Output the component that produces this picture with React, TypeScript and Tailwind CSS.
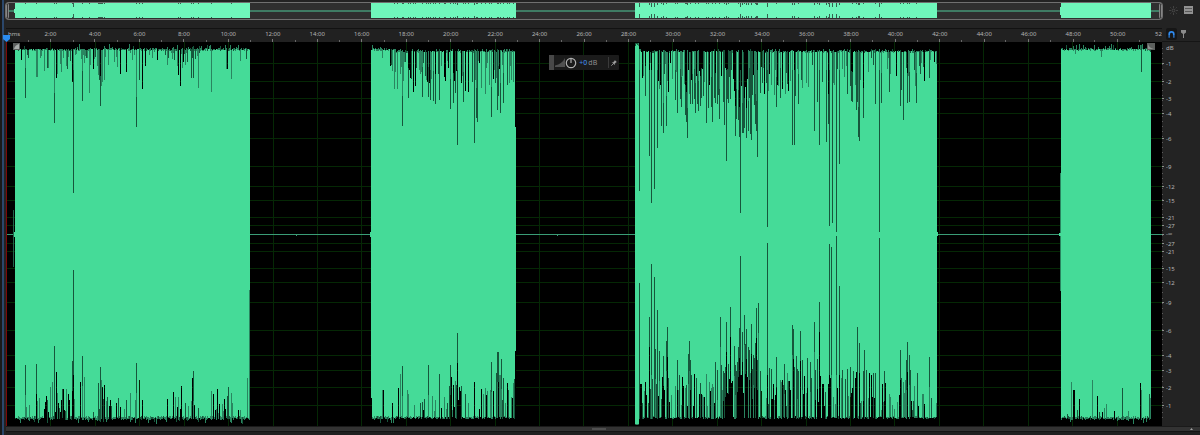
import type { ReactNode } from 'react';

type Dip = [x: number, y: number, w?: number];
type Zone = [from: number, to: number, chance: number, depth: number];

const LEFT = 6;
const TOP = 42;
const WIDTH = 1156;
const HEIGHT = 384;
const CENTER = 234;
const AMP = 192;

const MINUTES = Array.from({ length: 25 }, (_, i) => (i + 1) * 2);
const TICK = 44.42;
const DB = [1, 2, 3, 4, 6, 9, 12, 15, 21, 27];

// loud passages: start, end
const CLIPS = [
  [15, 250],
  [371, 516],
  [635, 937],
  [1061, 1151],
];

const TOP_DIPS: Dip[] = [
  [25, 98], [36, 77, 2], [40, 58], [44, 71], [47, 68, 2], [54, 123], [56, 78], [57, 74], [61, 72], [63, 58], [67, 69], [72, 82],
  [73, 193], [82, 101], [84, 63], [89, 93], [93, 69], [98, 75], [99, 80], [100, 106], [101, 86], [102, 82], [104, 80],
  [114, 62], [117, 67], [120, 74], [126, 72], [136, 127], [139, 80], [142, 89], [145, 66], [152, 58], [167, 65],
  [174, 60], [177, 66], [178, 75], [180, 86], [182, 68], [183, 62], [185, 65], [191, 78], [193, 78], [198, 88], [211, 92],
  [226, 69, 2], [231, 79], [240, 61], [246, 59],
  [382, 58], [392, 71], [394, 89], [397, 89], [400, 74], [402, 126], [403, 81], [408, 98], [410, 78], [413, 92], [415, 86],
  [420, 74], [422, 97], [426, 80], [428, 97], [430, 100], [433, 101], [435, 104], [439, 100], [444, 77], [445, 81],
  [450, 109], [453, 103], [455, 93], [457, 145], [463, 102], [465, 91], [468, 92], [474, 143], [476, 118], [477, 122],
  [481, 88], [485, 94], [489, 85], [491, 117], [497, 110], [498, 96], [500, 113], [503, 103], [507, 85], [509, 83], [513, 82],
  [639, 191], [642, 78], [645, 96], [649, 156], [651, 203], [654, 189], [657, 148], [661, 126], [663, 133], [666, 126],
  [668, 92], [675, 100], [677, 113], [685, 115], [686, 122], [687, 138], [690, 104], [695, 113], [698, 111], [701, 98],
  [703, 96], [706, 123], [708, 108], [712, 122], [715, 103], [719, 119], [724, 125], [726, 161], [728, 103], [734, 91],
  [738, 120], [740, 213], [742, 133], [744, 128], [746, 138], [748, 131], [751, 140], [755, 124], [756, 131], [757, 157],
  [760, 93], [764, 94], [767, 227], [774, 95], [776, 107], [780, 98], [782, 89], [792, 145], [794, 145], [795, 96],
  [798, 104], [802, 88], [808, 87], [814, 131], [817, 102], [819, 145], [826, 142], [828, 124], [829, 226], [832, 223],
  [834, 85], [836, 232], [839, 164], [847, 94], [852, 102], [856, 110], [858, 137], [859, 141], [863, 118], [868, 72],
  [875, 104], [879, 232], [881, 103], [889, 92], [900, 106], [901, 90], [903, 120], [907, 103], [909, 102], [916, 103],
  [920, 74], [924, 81], [929, 78], [936, 64],
  [1075, 54], [1101, 57], [1141, 72], [1150, 52],
];

const BOTTOM_DIPS: Dip[] = [
  [25, 365], [26, 407], [29, 405], [36, 364], [37, 401], [39, 398], [44, 409], [46, 396], [47, 400], [50, 387], [52, 382],
  [54, 346], [56, 372], [57, 393], [59, 408], [61, 400], [62, 389, 2], [66, 389], [68, 394], [69, 400], [72, 361], [73, 270],
  [74, 399], [80, 382], [82, 356], [84, 377], [93, 412], [98, 383], [100, 367], [101, 380], [102, 387], [104, 385], [106, 401],
  [107, 397], [110, 400], [116, 403], [118, 398], [120, 407], [124, 409], [126, 400], [130, 393], [135, 400], [136, 363],
  [139, 380], [142, 400], [167, 399], [173, 392], [175, 397], [178, 397], [181, 386], [185, 403], [191, 401], [192, 378],
  [193, 371], [198, 408], [211, 391], [213, 394], [217, 389], [219, 404], [224, 399], [227, 396], [228, 387], [231, 393],
  [232, 403], [238, 410], [240, 410], [247, 378], [249, 400],
  [371, 398], [382, 390, 2], [392, 403], [398, 388], [400, 374], [402, 366], [407, 390], [408, 394], [414, 405], [420, 403],
  [422, 402], [424, 399], [428, 365], [432, 396], [435, 400], [439, 374], [444, 397], [449, 386], [450, 365], [451, 377],
  [453, 385], [455, 381], [456, 385], [457, 333], [459, 387], [461, 386], [465, 394], [468, 403], [474, 382], [481, 389],
  [485, 388], [491, 362], [493, 391], [496, 373], [497, 352, 2], [499, 375, 2], [501, 359], [503, 378], [507, 383], [508, 390],
  [513, 383], [514, 379],
  [639, 283], [645, 382], [649, 317], [651, 264], [654, 277], [655, 349], [657, 310], [659, 351], [662, 377], [663, 356],
  [666, 341], [667, 327], [668, 378], [675, 386], [677, 360], [679, 375], [682, 377], [685, 388], [688, 354], [689, 341],
  [690, 360], [691, 375], [694, 374], [696, 378], [699, 394], [703, 397], [706, 374], [709, 382], [712, 384], [715, 362],
  [717, 370], [720, 317], [724, 373], [726, 322], [728, 364], [730, 307], [734, 346], [737, 362], [738, 347], [739, 328],
  [740, 256], [742, 332], [744, 315], [745, 344], [746, 329], [748, 347], [749, 350], [751, 324], [753, 355], [755, 343], [756, 308],
  [758, 303], [760, 371], [767, 243], [769, 368], [771, 369], [776, 357], [780, 380], [784, 364], [787, 373], [792, 325],
  [793, 329], [796, 356], [798, 371], [800, 331], [802, 360], [804, 376], [807, 358], [810, 362], [814, 322], [815, 370],
  [817, 359], [819, 302], [825, 392], [828, 384], [829, 244], [831, 247], [836, 236], [839, 286], [841, 378], [842, 370],
  [845, 379], [847, 369], [850, 367], [853, 371], [857, 327], [859, 343], [864, 350], [866, 370], [869, 373], [871, 375],
  [875, 373], [879, 238], [882, 384], [884, 371], [885, 383], [889, 394], [892, 405], [900, 350], [901, 378], [903, 382],
  [906, 360], [907, 342], [909, 355], [910, 370], [914, 386], [917, 373], [922, 394], [923, 394], [929, 357], [936, 403],
  [1067, 414], [1071, 382], [1073, 390, 2], [1077, 410], [1079, 399], [1092, 380], [1097, 396], [1099, 412], [1102, 412],
  [1104, 408], [1106, 404], [1114, 411], [1122, 388], [1128, 411], [1140, 383], [1141, 390], [1149, 394], [1150, 398],
];

// how densely the space between the named dips is filled
const TOP_ZONES: Zone[] = [
  [15, 60, 0.1, 12], [60, 110, 0.35, 16], [110, 170, 0.15, 10], [170, 200, 0.5, 12],
  [390, 516, 0.5, 32], [638, 680, 0.55, 42], [680, 720, 0.7, 55], [720, 735, 0.6, 50], [735, 758, 0.9, 85],
  [758, 800, 0.45, 42], [800, 850, 0.4, 34], [850, 862, 0.7, 55], [862, 896, 0.35, 22], [896, 937, 0.45, 34],
];
const BOTTOM_ZONES: Zone[] = [
  [45, 75, 0.4, 18], [98, 112, 0.5, 20], [170, 195, 0.3, 14], [210, 235, 0.3, 14],
  [400, 450, 0.2, 14], [450, 462, 0.8, 32], [475, 516, 0.4, 28], [638, 680, 0.6, 40], [680, 720, 0.5, 36],
  [720, 735, 0.8, 55], [735, 758, 1, 75], [758, 790, 0.6, 40], [790, 803, 0.8, 58], [803, 850, 0.6, 42],
  [850, 876, 0.8, 48], [876, 898, 0.3, 20], [898, 912, 0.8, 45], [912, 937, 0.3, 20],
];

function noise(n: number) {
  const v = Math.sin(n * 127.1 + 11.7) * 43758.5453;
  return v - Math.floor(v);
}

function depthAt(x: number, zones: Zone[], seed: number) {
  const zone = zones.find(([from, to]) => x >= from && x < to);
  if (!zone || noise(x + seed) > zone[2]) return 0;
  return Math.round((0.25 + noise(x * 3 + seed) * 0.75) * zone[3]);
}

function expand(dips: Dip[]) {
  const map = new Map<number, number>();
  dips.forEach(([x, y, w = 1]) => {
    for (let i = 0; i < w; i++) map.set(x + i, y);
  });
  return map;
}

function buildWave() {
  const top = expand(TOP_DIPS);
  const bottom = expand(BOTTOM_DIPS);
  const out = { body: '', mid: '', dark: '' };

  const shade = (x: number, from: number, to: number, seed: number, midShare: number) => {
    if (to <= from) return;
    const r = noise(x * 7 + seed);
    const rect = `M${x} ${from}h1V${to}h-1z`;
    if (r < midShare) out.mid += rect;
    else if (r < midShare + 0.25) out.dark += rect;
  };

  CLIPS.forEach(([start, end], clip) => {
    for (let x = start; x < end; x++) {
      const calm = clip === 1 ? x > 393 : clip === 2;
      const attack = x > 634 && x < 639;
      const base = calm ? 52 : 50;
      const jump = noise(x) > 0.82 ? Math.round(noise(x * 5) * 6) : Math.round(noise(x * 2) * 2);
      const low = noise(x + 900) > 0.82 ? Math.round(noise(x * 11) * 6) : Math.round(noise(x * 13) * 2);
      const outerTop = attack ? 43 : base - (calm ? Math.min(jump, 3) : jump);
      const outerBottom = attack ? 425 : (calm ? 417 : 418) + (calm ? Math.min(low, 2) : low);
      const ripple = Math.round(noise(x * 17) * 2) - 1;

      const innerTop = attack ? 44 + (x % 3) : (top.get(x) ?? base + ripple + depthAt(x, TOP_ZONES, 40));
      const innerBottom = attack ? 424 : (bottom.get(x) ?? 417 - ripple - depthAt(x, BOTTOM_ZONES, 80));
      out.body += `M${x} ${innerTop}h1V${innerBottom}h-1z`;

      const busyTop = x > 695 && x < 760;
      const busyBottom = (x > 722 && x < 762) || (x > 850 && x < 876) || (x > 788 && x < 800) || (x > 447 && x < 460);
      shade(x, outerTop, innerTop, 3, busyTop ? 0.2 : innerTop < 60 ? 0.8 : 0.5);
      shade(x, innerBottom, outerBottom, 9, busyBottom ? 0.12 : innerBottom > 412 ? 0.75 : 0.4);
      // long gaps stay readable as a thin dark stripe
      if (innerTop > 95) out.dark += `M${x} ${innerTop - 30}h1V${innerTop}h-1z`;
      if (innerBottom < 372) out.dark += `M${x} ${innerBottom}h1v30h-1z`;
      if (innerTop > 140) out.dark += `M${x} 70h1V${innerTop}h-1z`;
      if (innerBottom < 300) out.dark += `M${x} ${innerBottom}h1V375h-1z`;
    }
  });
  return out;
}

const WAVE = buildWave();

const LEVELS = DB.flatMap((db) => {
  const d = AMP * Math.pow(10, -db / 20);
  return [
    { label: `-${db}`, y: Math.round(CENTER - d) },
    { label: `-${db}`, y: Math.round(CENTER + d) },
  ];
});

const MINOR = Array.from({ length: 72 }, (_, i) => 48 + Math.round(i * 5.2));

function Waveform() {
  return (
    <svg
      className="block h-[384px] w-full"
      viewBox={`${LEFT} ${TOP} ${WIDTH} ${HEIGHT}`}
      preserveAspectRatio="none"
      shapeRendering="crispEdges"
      role="img"
      aria-label="Waveform"
    >
      <rect x={LEFT} y={TOP} width={WIDTH} height={HEIGHT} fill="#000" />
      {MINUTES.map((m) => (
        <rect key={m} x={Math.round(LEFT + (m / 2) * TICK)} y={TOP} width="1" height={HEIGHT} fill="#052805" />
      ))}
      {LEVELS.map(({ y }) => (
        <rect key={y} x={LEFT} y={y} width={WIDTH} height="1" fill="#052805" />
      ))}
      <rect x={LEFT} y={CENTER} width={WIDTH} height="1" fill="#3a9c76" />
      <path d={WAVE.mid} fill="#2a8560" />
      <path d={WAVE.dark} fill="#17563c" />
      <path d={WAVE.body} fill="#45db98" />
      <rect x="13" y="210" width="1" height="57" fill="#22634a" />
      <rect x="14" y="232" width="1" height="5" fill="#45db98" />
      <rect x="249" y="290" width="1" height="130" fill="#2a8560" />
      <rect x="370" y="232" width="1" height="5" fill="#45db98" />
      <rect x="515" y="44" width="1" height="83" fill="#000" />
      <rect x="515" y="351" width="1" height="74" fill="#000" />
      <rect x="937" y="232" width="1" height="4" fill="#45db98" />
      <rect x="1060" y="173" width="1" height="118" fill="#2a8560" />
      <rect x="1059" y="233" width="2" height="3" fill="#45db98" />
      <rect x="296" y="234" width="1" height="2" fill="#3a9c76" />
      <rect x="557" y="234" width="1" height="2" fill="#3a9c76" />
      <rect x={LEFT} y={TOP} width="1" height={HEIGHT} fill="#7d0808" />
      {/* fade handles */}
      <g shapeRendering="auto">
        <rect x="13" y="43" width="7" height="7" fill="#5c5f5d" />
        <path d="M14 49q1-4 5-5v5z" fill="#a9adab" />
        <rect x="1147" y="43" width="8" height="7" fill="#5c5f5d" />
        <path d="M1148 44q1 4 6 5h-6z" fill="#8f9391" />
      </g>
    </svg>
  );
}

function Overview() {
  const marks = TOP_DIPS.filter(([x, y]) => y > (x > 635 ? 98 : 74));
  return (
    <div className="relative h-4 overflow-hidden rounded-[3px] bg-[#2f2f2f] ring-1 ring-[#707070]">
      <svg
        className="block h-4 w-full"
        viewBox={`${LEFT} 0 ${WIDTH} 16`}
        preserveAspectRatio="none"
        shapeRendering="crispEdges"
        aria-hidden="true"
      >
        <rect x={LEFT} y="7" width={WIDTH} height="2" fill="#3f7c64" />
        {CLIPS.map(([a, b]) => (
          <rect key={a} x={a} y="0" width={b - a} height="15" fill="#6ff6bb" />
        ))}
        {marks.map(([x, y]) => {
          const h = y > 185 ? 4 : y > 130 ? 2 : 1;
          return <path key={x} d={`M${x} 0h1v${h}h-1zM${x} ${15 - h}h1v${h}h-1z`} fill="#35624f" />;
        })}
        <rect x="14" y="6" width="1" height="4" fill="#6ff6bb" />
        <rect x="1060" y="4" width="1" height="8" fill="#6ff6bb" />
      </svg>
      <button aria-label="Range start" className="absolute inset-y-0 left-0 w-[3px] rounded-sm border border-[#858585] bg-[#3c3c3c]" />
      <button aria-label="Range end" className="absolute inset-y-0 right-0 w-[3px] rounded-sm border border-[#858585] bg-[#3c3c3c]" />
    </div>
  );
}

function Ruler() {
  return (
    <div className="relative flex h-[13px] overflow-hidden bg-[#212121] text-[6px] leading-[10px] text-[#b4b4b4]">
      <div className="w-0 grow">
        <span className="pl-[2px]">hms</span>
      </div>
      {MINUTES.map((m) => (
        <div key={m} className="flex w-0 grow-[2] flex-col items-center justify-between">
          <span>{m}:00</span>
          <span className="h-[3px] w-px bg-[#777]" />
        </div>
      ))}
      <div className="w-0 grow overflow-hidden whitespace-nowrap">
        <span className="pl-[15px]">52:00</span>
      </div>
      <svg
        className="absolute inset-x-0 bottom-0 h-[2px] w-full"
        viewBox={`0 0 ${WIDTH} 2`}
        preserveAspectRatio="none"
        aria-hidden="true"
      >
        {[1, ...MINUTES.map((m) => m + 1)].map((m) => (
          <rect key={m} x={Math.round((m / 2) * TICK)} width="1" height="2" fill="#666" />
        ))}
      </svg>
    </div>
  );
}

function LevelScale() {
  return (
    <svg className="block h-[384px] w-full" viewBox="1162 42 38 384" fontSize="6" fill="#b4b4b4" aria-label="Level scale in dB">
      {MINOR.map((y) => (
        <rect key={y} x="1162" y={y} width="1" height="1" fill="#5c5c5c" />
      ))}
      <text x="1166" y="50">dB</text>
      {LEVELS.map(({ label, y }) => (
        <g key={y}>
          <rect x="1162" y={y} width="2" height="1" fill="#909090" />
          <text x="1166" y={y + 3}>{label}</text>
        </g>
      ))}
      <rect x="1162" y="234" width="2" height="1" fill="#909090" />
      <text x="1166" y="236">-∞</text>
    </svg>
  );
}

function Hud() {
  return (
    <div className="absolute left-[47%] top-[13px] flex h-[15px] w-[70px] items-center rounded-[1px] bg-[#1b1b1b] text-[7px] leading-none">
      <span className="h-full w-[5px] bg-[#484848]" />
      <svg className="ml-px h-[9px] w-[10px]" viewBox="0 0 10 9" aria-hidden="true">
        <path d="M0 9V7.500Q7 6 10 0v9z" fill="#505050" />
      </svg>
      <button aria-label="Adjust amplitude">
        <svg className="h-3 w-3" viewBox="0 0 12 12" fill="none" stroke="#b0b0b0">
          <circle cx="6" cy="6" r="4.7" strokeWidth="1.2" />
          <path d="M6 1.500v4.500" strokeWidth="1.200" />
        </svg>
      </button>
      <span className="ml-[2px] font-medium text-[#3d86e0]">+0</span>
      <span className="ml-px text-[#8e8e8e]">dB</span>
      <span className="ml-auto h-[11px] w-px bg-[#3a3a3a]" />
      <button aria-label="Pin" className="mx-[2px]">
        <svg className="h-[6px] w-[6px]" viewBox="0 0 6 6">
          <path d="M.3 5.700 2.200 3.800M1.300 2.400 3.700 4.800" stroke="#a8a8a8" strokeWidth=".8" />
          <path d="M2 2.600 4 .8 3.800 .3 5.700 2.200 5.200 2 3.400 4z" fill="#a8a8a8" stroke="#a8a8a8" strokeWidth=".3" />
        </svg>
      </button>
    </div>
  );
}

function IconButton({ label, className = '', children }: { label: string; className?: string; children: ReactNode }) {
  return (
    <button aria-label={label} className={`flex items-center justify-center ${className}`}>
      {children}
    </button>
  );
}

function ResizeBar() {
  return (
    <div className="h-[9px] bg-[#202020]">
      <div className="grid h-[6px] grid-cols-3 items-center border-y border-t-[#1a1a1a] border-b-[#141414] bg-[#333] pr-[7px]">
        <span className="col-start-2 h-[2px] w-[14px] justify-self-center bg-[#505050]" />
        <svg className="h-[2px] w-[3px] justify-self-end" viewBox="0 0 3 2" aria-hidden="true">
          <path d="M0 2 1.500 0 3 2z" fill="#a0a0a0" />
        </svg>
      </div>
    </div>
  );
}

export default function App() {
  return (
    <div className="flex w-full bg-[#232323] font-['Noto_Sans','Open_Sans',sans-serif]">
      <div className="mr-[2px] w-1 shrink-0 border-r-2 border-r-[#2b476b] bg-[#191919]" />
      <div className="min-w-0 flex-1">
        <div className="flex">
          <main className="relative min-w-0 flex-1">
            <div className="pb-[9px] pt-[3px]">
              <Overview />
            </div>
            <div className="h-px bg-[#121212]" />
            <Ruler />
            <div className="relative">
              <Waveform />
              <Hud />
            </div>
            {/* playhead */}
            <svg className="absolute -left-[3px] top-[35px] h-[7px] w-[7px]" viewBox="0 0 7 7" aria-hidden="true">
              <path d="M0 0h7v4L3.500 7 0 4z" fill="#2b8cf0" />
            </svg>
          </main>
          <aside className="w-[38px] shrink-0">
            <div className="flex h-7 items-start gap-[6px] pl-[7px] pt-[6px]">
              <IconButton label="Zoom to selection">
                <svg className="h-[9px] w-[9px]" viewBox="0 0 9 9" stroke="#4b4b4b" fill="none">
                  <circle cx="4.500" cy="4.500" r="1.400" />
                  <path d="M4.500 0v2M4.500 7v2M0 4.500h2M7 4.500h2M1.300 1.300l1 1M6.700 6.700l1 1M7.700 1.300l-1 1M1.300 7.700l1-1" strokeWidth=".8" />
                </svg>
              </IconButton>
              <IconButton label="Panel menu">
                <svg className="h-[8px] w-[9px]" viewBox="0 0 9 8">
                  <path d="M0 0h9v8H0z" fill="#929292" />
                  <path d="M1 2.500h7M1 5.500h7" stroke="#4a4a4a" strokeWidth=".8" />
                </svg>
              </IconButton>
            </div>
            <div className="flex h-[14px] items-start gap-[3px] border-b border-b-[#151515] pl-[4px]">
              <IconButton label="Snapping" className="h-3 w-[11px] rounded-[2px] bg-[#161616]">
                <svg className="h-[7px] w-[7px]" viewBox="0 0 7 7" fill="none">
                  <path d="M1.200 6.500V3.200a2.300 2.300 0 0 1 4.600 0v3.300" stroke="#2f8cf2" strokeWidth="1.700" />
                  <path d="M0 5h2.200M4.800 5H7" stroke="#161616" strokeWidth=".6" />
                </svg>
              </IconButton>
              <IconButton label="Add marker" className="h-3 w-[6px]">
                <svg className="h-[8px] w-[5px]" viewBox="0 0 5 8">
                  <path d="M0 0h5v2.500L3 4v4H2V4L0 2.500z" fill="#8c8c8c" />
                </svg>
              </IconButton>
            </div>
            <LevelScale />
          </aside>
        </div>
        <ResizeBar />
      </div>
    </div>
  );
}
